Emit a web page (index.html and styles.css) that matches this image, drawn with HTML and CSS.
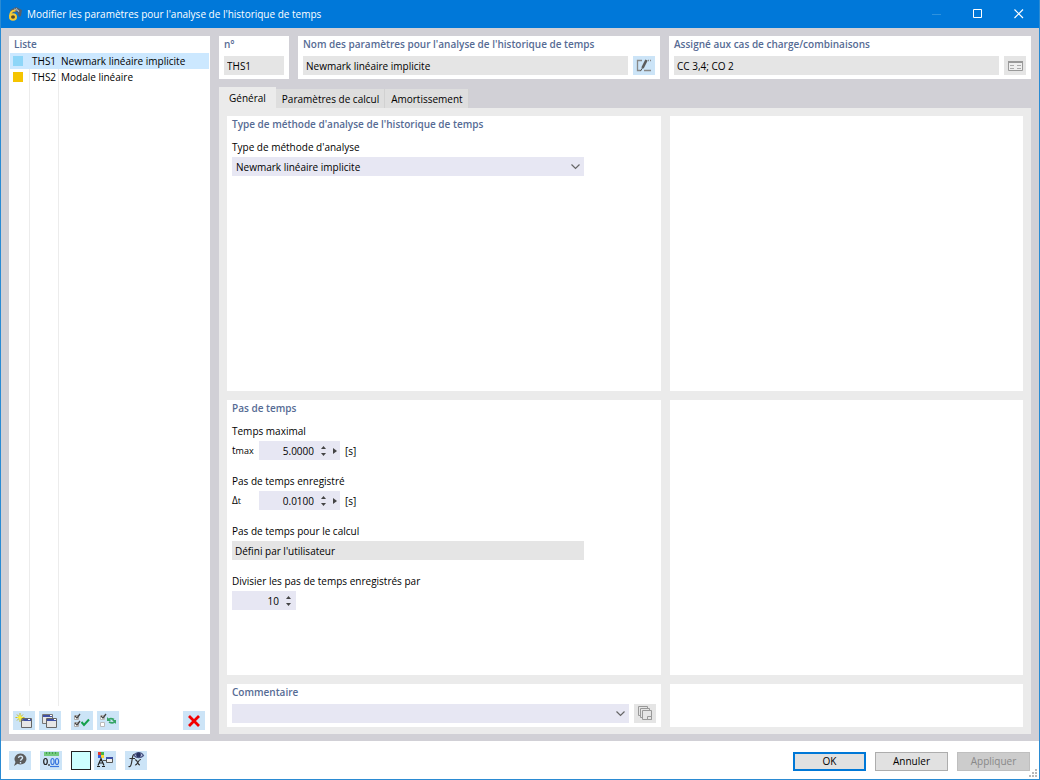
FILE: index.html
```html
<!DOCTYPE html>
<html lang="fr">
<head>
<meta charset="utf-8">
<meta name="viewport" content="width=device-width, initial-scale=1">
<title>Modifier les paramètres pour l'analyse de l'historique de temps</title>
<link rel="stylesheet" href="styles.css">
</head>
<body>
<div class="window">
  <header class="titlebar">
    <svg class="app-icon" width="14" height="14" viewBox="0 0 14 14" aria-hidden="true">
      <path d="M2 3l6-3 6 3-1 6-2 1-2-5-4 1z" fill="#56606c"/>
      <path d="M6 2l5 2M8 1l3 4" stroke="#a9b5bf"/>
      <path d="M7.500 3.500C4 3.500 2 6 2 9.500" fill="none" stroke="#f5c935" stroke-width="2"/>
      <ellipse cx="5" cy="10" rx="3" ry="2.800" fill="#554a2b" stroke="#f5c935" stroke-width="2"/>
    </svg>
    <h1 class="title">Modifier les paramètres pour l'analyse de l'historique de temps</h1>
    <div class="window-buttons">
      <button class="window-button" aria-label="Réduire" disabled><svg width="10" height="10" viewBox="0 0 10 10"><path d="M0 5.500h9" stroke="#2e92de"/></svg></button>
      <button class="window-button" aria-label="Agrandir"><svg width="10" height="10" viewBox="0 0 10 10"><path d="M.5.500h8v8h-8z" fill="none" stroke="#fff"/></svg></button>
      <button class="window-button" aria-label="Fermer"><svg width="10" height="10" viewBox="0 0 10 10"><path d="M.5.500l8.500 8.500M9 .5L.5 9" stroke="#fff" stroke-width="1.200"/></svg></button>
    </div>
  </header>

  <main class="workspace">
    <aside class="sidebar">
      <h2 class="heading list-heading">Liste</h2>
      <div class="list">
        <button class="list-row selected" aria-pressed="true"><span class="swatch swatch-blue"></span><span>THS1</span><span>Newmark linéaire implicite</span></button>
        <button class="list-row" aria-pressed="false"><span class="swatch swatch-gold"></span><span>THS2</span><span>Modale linéaire</span></button>
      </div>
      <div class="toolbar">
        <button class="tool" aria-label="Nouveau"><svg width="18" height="18" viewBox="0 0 18 18">
          <path d="M6.500 6.500h10v9h-10z" fill="#e6e6e6" stroke="#666"/><path d="M7 7h9v2H7z" fill="#3f51a5"/><path d="M13 7h2v1h-2z" fill="#fff"/>
          <path d="M5 1v9M.5 5.500h9M2 2.500l6 6M8 2.500l-6 6" stroke="#c2b82a"/><path d="M5 2.500l1 2 2.500 1-2.500 1-1 2-1-2-2.500-1 2.500-1z" fill="#fff23b"/></svg></button>
        <button class="tool" aria-label="Copier"><svg width="18" height="18" viewBox="0 0 18 18">
          <path d="M1.500 2.500h10v9h-10z" fill="#e6e6e6" stroke="#777"/><path d="M2 3h9v2H2z" fill="#3f51a5"/><path d="M9 3h2v1H9z" fill="#fff"/>
          <path d="M5.500 6.500h10v9h-10z" fill="#e6e6e6" stroke="#666"/><path d="M6 7h9v2H6z" fill="#3f51a5"/><path d="M13 7h2v1h-2z" fill="#fff"/></svg></button>
        <button class="tool spaced" aria-label="Tout sélectionner"><svg width="18" height="18" viewBox="0 0 18 18">
          <g fill="#fff" stroke="#aaa"><path d="M1.500 3.500h4v4h-4zM1.500 10.500h4v4h-4z"/></g><path d="M2 4l2 2 3-4M2 11l2 2 3-4" fill="none" stroke="#444" stroke-width="1.300"/>
          <path d="M8.500 10l2.500 3 5-5.500" fill="none" stroke="#15a04c" stroke-width="2"/></svg></button>
        <button class="tool" aria-label="Inverser la sélection"><svg width="18" height="18" viewBox="0 0 18 18">
          <g fill="#fff" stroke="#bbb"><path d="M1.500 3.500h4v4h-4zM1.500 10.500h4v4h-4z"/></g><path d="M2 4l2 2 3-4" fill="none" stroke="#444" stroke-width="1.300"/>
          <path d="M9 8c2-2.500 4-1.500 6-.5M16 9.500c-2 2.500-4 1.500-6 .5" fill="none" stroke="#36a566" stroke-width="1.800"/><path d="M8 5v4h4zM17 12V8h-4z" fill="#36a566"/></svg></button>
        <button class="tool push" aria-label="Supprimer"><svg width="18" height="18" viewBox="0 0 18 18"><path d="M4 4l10 10M14 4L4 14" stroke="#f20000" stroke-width="2.800"/></svg></button>
      </div>
    </aside>

    <section class="editor">
      <div class="summary">
        <div class="card field-card">
          <label class="heading" for="number">n°</label>
          <div class="field-line"><input class="field readonly" id="number" value="THS1" readonly></div>
        </div>
        <div class="card field-card">
          <label class="heading" for="name">Nom des paramètres pour l'analyse de l'historique de temps</label>
          <div class="field-line"><input class="field readonly" id="name" value="Newmark linéaire implicite" readonly>
            <button class="tool" aria-label="Modifier le nom"><svg width="18" height="18" viewBox="0 0 18 18" fill="none" stroke="#888"><path d="M7 3.500H2.500v10H6M9 13.500h7M13 3.500h1M15 3.500h1" stroke-width="1.300"/><path d="M7.500 11l4-8" stroke="#5c5c5c" stroke-width="2.600"/><path d="M5.500 14l2-3" stroke="#555"/></svg></button></div>
        </div>
        <div class="card field-card">
          <label class="heading" for="assigned">Assigné aux cas de charge/combinaisons</label>
          <div class="field-line"><input class="field readonly" id="assigned" value="CC 3,4; CO 2" readonly>
            <button class="tool muted" aria-label="Détails"><svg width="18" height="18" viewBox="0 0 18 18"><path d="M2.500 4.500h14v9h-14z" fill="#eee" stroke="#999"/><path d="M2 4h15v2H2z" fill="#999"/><path d="M4 8.500h4M11 8.500h4M4 11.500h4M11 11.500h4" stroke="#aaa"/></svg></button></div>
        </div>
      </div>

      <nav class="tabs" role="tablist">
        <button class="tab active" role="tab" aria-selected="true">Général</button>
        <button class="tab" role="tab" aria-selected="false">Paramètres de calcul</button>
        <button class="tab" role="tab" aria-selected="false">Amortissement</button>
      </nav>

      <div class="panels" role="tabpanel">
        <section class="card panel">
          <h2 class="heading">Type de méthode d'analyse de l'historique de temps</h2>
          <div class="group">
            <label class="label" for="method">Type de méthode d'analyse</label>
            <div class="combo medium"><select class="field" id="method"><option>Newmark linéaire implicite</option></select>
              <svg class="chevron" width="9" height="6" viewBox="0 0 9 6"><path d="M.5.500l4 4 4-4" fill="none" stroke="#666" stroke-width="1.200"/></svg></div>
          </div>
        </section>
        <section class="card panel"></section>
        <section class="card panel">
          <h2 class="heading">Pas de temps</h2>
          <div class="group">
            <label class="label" for="tmax">Temps maximal</label>
            <div class="value-line"><span class="symbol">t<small class="subscript">max</small></span>
              <div class="spinner"><input class="field number" id="tmax" value="5.0000">
                <span class="steps"><button class="step" aria-label="Augmenter"><svg width="5" height="3" viewBox="0 0 5 3"><path d="M0 3l2.500-3L5 3z"/></svg></button><button class="step" aria-label="Diminuer"><svg width="5" height="3" viewBox="0 0 5 3"><path d="M0 0l2.500 3L5 0z"/></svg></button></span>
                <button class="more" aria-label="Options"><svg width="4" height="6" viewBox="0 0 4 6"><path d="M0 0l4 3-4 3z"/></svg></button></div>
              <span>[s]</span></div>
          </div>
          <div class="group">
            <label class="label" for="dt">Pas de temps enregistré</label>
            <div class="value-line"><span class="symbol">Δ<small class="subscript">t</small></span>
              <div class="spinner"><input class="field number" id="dt" value="0.0100">
                <span class="steps"><button class="step" aria-label="Augmenter"><svg width="5" height="3" viewBox="0 0 5 3"><path d="M0 3l2.500-3L5 3z"/></svg></button><button class="step" aria-label="Diminuer"><svg width="5" height="3" viewBox="0 0 5 3"><path d="M0 0l2.500 3L5 0z"/></svg></button></span>
                <button class="more" aria-label="Options"><svg width="4" height="6" viewBox="0 0 4 6"><path d="M0 0l4 3-4 3z"/></svg></button></div>
              <span>[s]</span></div>
          </div>
          <div class="group">
            <label class="label" for="calc">Pas de temps pour le calcul</label>
            <input class="field readonly medium" id="calc" value="Défini par l'utilisateur" readonly>
          </div>
          <div class="group">
            <label class="label" for="divide">Divisier les pas de temps enregistrés par</label>
            <div class="spinner short"><input class="field number" id="divide" value="10">
              <span class="steps"><button class="step" aria-label="Augmenter"><svg width="5" height="3" viewBox="0 0 5 3"><path d="M0 3l2.500-3L5 3z"/></svg></button><button class="step" aria-label="Diminuer"><svg width="5" height="3" viewBox="0 0 5 3"><path d="M0 0l2.500 3L5 0z"/></svg></button></span></div>
          </div>
        </section>
        <section class="card panel"></section>
        <section class="card field-card">
          <label class="heading" for="comment">Commentaire</label>
          <div class="field-line"><div class="combo"><select class="field" id="comment"><option></option></select>
            <svg class="chevron" width="9" height="6" viewBox="0 0 9 6"><path d="M.5.500l4 4 4-4" fill="none" stroke="#666" stroke-width="1.200"/></svg></div>
            <button class="tool muted" aria-label="Copier le commentaire"><svg width="18" height="18" viewBox="0 0 18 18" fill="#e5e5e5" stroke="#999"><path d="M2.500 1.500h9v9h-9z"/><path d="M4.500 3.500h9v9h-9z"/><path d="M6.500 5.500h9v9h-9z"/><path d="M11.500 11.500h4v3h-4z"/></svg></button></div>
        </section>
        <section class="card"></section>
      </div>
    </section>
  </main>

  <footer class="footer">
    <div class="footer-tools">
      <button class="tool" aria-label="Aide"><svg width="18" height="18" viewBox="0 0 18 18"><path d="M9.500 2.500a6 5.500 0 1 1-3 10.300L3 15l1.500-4a6 5.500 0 0 1 5-8.500z" fill="#5c5c5c"/><path d="M7.500 6.800c.5-2.500 4.500-2 4 .4-.3 1.300-2 1-2 2.600M9.500 11v1.500" fill="none" stroke="#d5e8f7" stroke-width="1.400"/></svg></button>
      <button class="tool spaced" aria-label="Unités"><svg width="18" height="18" viewBox="0 0 18 18"><path d="M2 1h15v4H2z" fill="#72ca7d"/><path d="M4.500 1v2M7.500 1v2M10.500 1v2M13.500 1v2" stroke="#439f53"/><g fill="none" stroke="#222" stroke-width="1.200"><ellipse cx="3.500" cy="10.500" rx="1.800" ry="3"/><path d="M7 13v2"/></g><g fill="none" stroke="#3975df" stroke-width="1.200"><ellipse cx="10.500" cy="10.500" rx="1.600" ry="3"/><ellipse cx="15" cy="10.500" rx="1.600" ry="3"/><path d="M8 15.500h9"/></g></svg></button>
      <button class="color-box spaced" aria-label="Couleur"></button>
      <button class="tool" aria-label="Affichage"><svg width="18" height="18" viewBox="0 0 18 18"><path d="M2 1h3v3H2z" fill="#e8362b"/><path d="M5 1h3v3H5z" fill="#44b649"/><path d="M2 4h3v3H2z" fill="#365fe0"/><path d="M5 4h3v3H5z" fill="#ffd62f"/><path d="M2 14.500l3-7 3 7M3.500 12h3M1 15.500h3M6 15.500h3" fill="none" stroke="#222" stroke-width="1.200"/><path d="M10.500 6.500h6v5h-6z" fill="#eee" stroke="#555"/><path d="M10 6h7v2h-7z" fill="#3f51a5"/><path d="M7 9.500h3" stroke="#555"/></svg></button>
      <button class="tool spaced" aria-label="Formules"><svg width="18" height="18" viewBox="0 0 18 18" fill="none" stroke="#333" stroke-width="1.200"><path d="M8 3.500C5.500 2.500 5.500 7 4.500 12c-.5 3-1.500 4-3 3.500M2.500 7.500H8M8 9c3-1 2 5 5 5M14 8.500c-3-.5-3 6-6 5.500"/><path d="M7 4.500c2.500-4 7-4 9.500 0-2.500 3-7 3-9.500 0z" fill="#bdc6e5" stroke="#4a5684"/><circle cx="11.500" cy="4" r="1.800" fill="#26315f" stroke="#26315f"/></svg></button>
    </div>
    <div class="dialog-buttons">
      <button class="dialog-button primary">OK</button>
      <button class="dialog-button">Annuler</button>
      <button class="dialog-button" disabled>Appliquer</button>
    </div>
    <svg class="grip" width="8" height="8" viewBox="0 0 8 8" aria-hidden="true"><path d="M6 0h2v2H6zM3 3h2v2H3zM6 3h2v2H6zM0 6h2v2H0zM3 6h2v2H3zM6 6h2v2H6z" fill="#b8b8b8"/></svg>
  </footer>
</div>
</body>
</html>
```

FILE: styles.css
```css
* { box-sizing: border-box; }

body {
  margin: 0;
  font: 500 10px/14px "Open Sans", "Noto Sans", sans-serif;
  color: #000;
}

button, input, select {
  margin: 0;
  padding: 0;
  border: 0;
  border-radius: 0;
  font: inherit;
  color: inherit;
  background: none;
}

h1, h2 { margin: 0; }
svg { display: block; }

.window {
  display: flex;
  flex-direction: column;
  min-height: 100vh;
  border: 1px solid #2b8bd3;
  border-top: 0;
  background: #fff;
}

.titlebar {
  display: flex;
  align-items: center;
  height: 28px;
  padding-left: 7px;
  gap: 5px;
  background: #0078d9;
  color: #fff;
}

.title { flex: 1; font-size: 10px; font-weight: 500; }
.window-buttons { display: flex; }
.window-button { display: grid; place-items: center; width: 41px; height: 28px; }

.workspace {
  flex: 1;
  display: grid;
  grid-template-columns: 201px 1fr;
  gap: 9px;
  padding: 8px 8px 7px;
  background: #d1d0d6;
}

.heading { display: block; font-size: 10px; line-height: 14px; font-weight: 600; color: #566b94; }

.sidebar { display: flex; flex-direction: column; padding: 1px 1px 4px; background: #fff; }
.list-heading { padding: 0 4px 2px; }

.list {
  flex: 1;
  background: linear-gradient(#ececec, #ececec) 19px 0 / 1px 100% no-repeat,
    linear-gradient(#ececec, #ececec) 48px 0 / 1px 100% no-repeat;
}

.list-row {
  display: grid;
  grid-template-columns: 19px 29px 1fr;
  align-items: center;
  width: 100%;
  height: 16px;
  padding-left: 3px;
  text-align: left;
}

.selected { background: #cce8ff; }
.swatch { width: 10px; height: 10px; }
.swatch-blue { background: #8ed6f8; }
.swatch-gold { background: #f5c400; }

.toolbar { display: flex; gap: 4px; padding: 5px 4px 0 3px; }
.tool { display: grid; place-items: center; flex: none; width: 22px; height: 19px; background: #cce4f7; }
.muted { background: #e5e5e5; }
.push { margin-left: auto; }
.spaced { margin-left: 6px; }

.editor { display: flex; flex-direction: column; min-width: 0; }
.summary { display: grid; grid-template-columns: 70px 1fr 1fr; gap: 9px; }
.card { min-width: 0; background: #fff; }
.field-card { height: 43px; padding: 1px 5px 0; }
.field-line { display: flex; gap: 5px; margin-top: 5px; }

.field { display: block; width: 100%; min-width: 0; height: 19px; padding: 0 4px; background: #e7e7f3; }
.readonly { padding: 0 3px; background: #e5e5e5; }
.medium { width: 352px; max-width: 100%; }

.tabs { display: flex; align-items: flex-end; height: 21px; margin-top: 8px; }
.tab { height: 19px; padding: 0 5px 0 6px; border-right: 1px solid #d1d1d1; background: #dedede; }
.active { height: 21px; padding: 0 10px; border-right: 0; background: #ebebeb; }

.panels {
  flex: 1;
  display: grid;
  grid-template-columns: 434fr 353fr;
  grid-template-rows: 1fr 1fr 43px;
  gap: 9px;
  padding: 8px 8px 7px;
  background: #ebebeb;
}

.panel { padding: 1px 5px; }
.group { margin-top: 9px; }
.group + .group { margin-top: 14px; }
.label { display: block; margin-bottom: 3px; }

.combo { position: relative; flex: 1; }
.combo select { appearance: none; }
.chevron { position: absolute; right: 4px; top: 7px; pointer-events: none; }

.value-line { display: flex; align-items: center; }
.symbol { width: 27px; }
.subscript { font-size: 9px; }
.spinner { display: flex; align-items: center; width: 81px; height: 19px; margin-right: 5px; background: #e7e7f3; }
.short { width: 64px; }
.number { flex: 1; padding: 0 7px 0 0; background: none; text-align: right; }
.steps { display: flex; flex-direction: column; gap: 3px; margin-right: 5px; }
.step { display: block; width: 5px; height: 4px; }
.step svg, .more svg { fill: #444; }
.more { width: 4px; margin: 0 3px 0 2px; }

.footer { display: flex; align-items: center; justify-content: space-between; height: 38px; padding: 0 9px 0 8px; position: relative; }
.footer-tools { display: flex; align-items: center; gap: 3px; }
.color-box { width: 20px; height: 19px; border: 1px solid #222; background: #ccffff; }
.dialog-buttons { display: flex; gap: 9px; margin-top: 2px; }
.dialog-button { width: 73px; height: 19px; border: 1px solid #adadad; background: #e1e1e1; }
.primary { border: 2px solid #0078d7; }
.dialog-button:disabled { border-color: #bfbfbf; background: #ccc; color: #888; }
.grip { position: absolute; right: 2px; bottom: 2px; }
```
